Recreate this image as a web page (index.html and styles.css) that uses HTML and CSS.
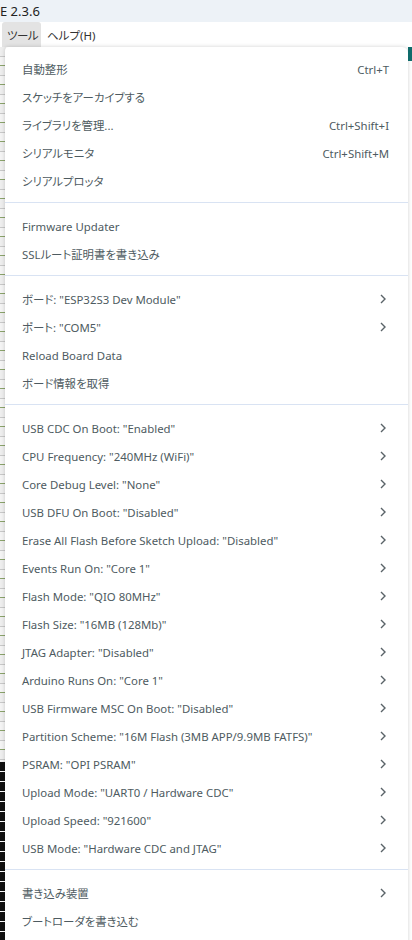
FILE: index.html
```html
<!DOCTYPE html>
<html lang="ja">
<head>
<meta charset="utf-8">
<link rel="stylesheet" href="styles.css">
</head>
<body>
<div class="titlebar">E 2.3.6</div>
<div class="menubar">
  <span class="mb-item active">ツール</span>
  <span class="mb-item">ヘルプ(H)</span>
</div>
<div class="backdrop">
  <div class="strip-left">
    <div class="bits"></div>
    <div class="dark"></div>
  </div>
</div>
<div class="menu">
  <div class="group">
    <div class="item"><span class="label">自動整形</span><span class="key">Ctrl+T</span></div>
    <div class="item"><span class="label">スケッチをアーカイブする</span></div>
    <div class="item"><span class="label">ライブラリを管理...</span><span class="key">Ctrl+Shift+I</span></div>
    <div class="item"><span class="label">シリアルモニタ</span><span class="key">Ctrl+Shift+M</span></div>
    <div class="item"><span class="label">シリアルプロッタ</span></div>
  </div>
  <div class="sep"></div>
  <div class="group">
    <div class="item"><span class="label">Firmware Updater</span></div>
    <div class="item"><span class="label">SSLルート証明書を書き込み</span></div>
  </div>
  <div class="sep"></div>
  <div class="group">
    <div class="item sub"><span class="label">ボード: "ESP32S3 Dev Module"</span><svg class="chev" viewBox="0 0 6 10"><path d="M1 1l4 4-4 4"/></svg></div>
    <div class="item sub"><span class="label">ポート: "COM5"</span><svg class="chev" viewBox="0 0 6 10"><path d="M1 1l4 4-4 4"/></svg></div>
    <div class="item"><span class="label">Reload Board Data</span></div>
    <div class="item"><span class="label">ボード情報を取得</span></div>
  </div>
  <div class="sep"></div>
  <div class="group">
    <div class="item sub"><span class="label">USB CDC On Boot: "Enabled"</span><svg class="chev" viewBox="0 0 6 10"><path d="M1 1l4 4-4 4"/></svg></div>
    <div class="item sub"><span class="label">CPU Frequency: "240MHz (WiFi)"</span><svg class="chev" viewBox="0 0 6 10"><path d="M1 1l4 4-4 4"/></svg></div>
    <div class="item sub"><span class="label">Core Debug Level: "None"</span><svg class="chev" viewBox="0 0 6 10"><path d="M1 1l4 4-4 4"/></svg></div>
    <div class="item sub"><span class="label">USB DFU On Boot: "Disabled"</span><svg class="chev" viewBox="0 0 6 10"><path d="M1 1l4 4-4 4"/></svg></div>
    <div class="item sub"><span class="label">Erase All Flash Before Sketch Upload: "Disabled"</span><svg class="chev" viewBox="0 0 6 10"><path d="M1 1l4 4-4 4"/></svg></div>
    <div class="item sub"><span class="label">Events Run On: "Core 1"</span><svg class="chev" viewBox="0 0 6 10"><path d="M1 1l4 4-4 4"/></svg></div>
    <div class="item sub"><span class="label">Flash Mode: "QIO 80MHz"</span><svg class="chev" viewBox="0 0 6 10"><path d="M1 1l4 4-4 4"/></svg></div>
    <div class="item sub"><span class="label">Flash Size: "16MB (128Mb)"</span><svg class="chev" viewBox="0 0 6 10"><path d="M1 1l4 4-4 4"/></svg></div>
    <div class="item sub"><span class="label">JTAG Adapter: "Disabled"</span><svg class="chev" viewBox="0 0 6 10"><path d="M1 1l4 4-4 4"/></svg></div>
    <div class="item sub"><span class="label">Arduino Runs On: "Core 1"</span><svg class="chev" viewBox="0 0 6 10"><path d="M1 1l4 4-4 4"/></svg></div>
    <div class="item sub"><span class="label">USB Firmware MSC On Boot: "Disabled"</span><svg class="chev" viewBox="0 0 6 10"><path d="M1 1l4 4-4 4"/></svg></div>
    <div class="item sub"><span class="label">Partition Scheme: "16M Flash (3MB APP/9.9MB FATFS)"</span><svg class="chev" viewBox="0 0 6 10"><path d="M1 1l4 4-4 4"/></svg></div>
    <div class="item sub"><span class="label">PSRAM: "OPI PSRAM"</span><svg class="chev" viewBox="0 0 6 10"><path d="M1 1l4 4-4 4"/></svg></div>
    <div class="item sub"><span class="label">Upload Mode: "UART0 / Hardware CDC"</span><svg class="chev" viewBox="0 0 6 10"><path d="M1 1l4 4-4 4"/></svg></div>
    <div class="item sub"><span class="label">Upload Speed: "921600"</span><svg class="chev" viewBox="0 0 6 10"><path d="M1 1l4 4-4 4"/></svg></div>
    <div class="item sub"><span class="label">USB Mode: "Hardware CDC and JTAG"</span><svg class="chev" viewBox="0 0 6 10"><path d="M1 1l4 4-4 4"/></svg></div>
  </div>
  <div class="sep"></div>
  <div class="group">
    <div class="item sub"><span class="label">書き込み装置</span><svg class="chev" viewBox="0 0 6 10"><path d="M1 1l4 4-4 4"/></svg></div>
    <div class="item"><span class="label">ブートローダを書き込む</span></div>
  </div>
</div>
</body>
</html>
```
FILE: styles.css
```css
* { box-sizing: border-box; }
html, body {
  margin: 0;
  padding: 0;
  width: 412px;
  height: 940px;
  overflow: hidden;
  background: #ffffff;
  font-family: "Noto Sans", "Noto Sans CJK JP", sans-serif;
  font-feature-settings: "palt";
}
.titlebar {
  height: 22px;
  background: #edf2f7;
  color: #222;
  font-size: 13px;
  line-height: 22px;
  padding-left: 0;
}
.menubar {
  height: 25px;
  background: #ffffff;
  display: flex;
  align-items: stretch;
  padding-left: 2px;
  font-size: 11.5px;
  color: #333;
}
.mb-item {
  display: flex;
  align-items: center;
  white-space: nowrap;
  padding: 0 0 0 6px;
}
.mb-item.active {
  width: 39px;
  padding-left: 5px;
  letter-spacing: -0.6px;
  background: #e3e3e3;
  border-radius: 3px 3px 0 0;
}
.backdrop {
  height: 893px;
  display: flex;
  justify-content: space-between;
  background: #ffffff;
}
.strip-left {
  width: 6px;
  display: flex;
  flex-direction: column;
}
.bits {
  height: 715px;
  background: repeating-linear-gradient(#eeeeee 0 9px, #c8c8c8 9px 10px, #f4f4f4 10px 18px, #8aa36a 18px 19px);
}
.dark {
  flex: 1;
  background: repeating-linear-gradient(#111 0 9px, #ffffff 9px 10px);
}
.menu {
  position: absolute;
  left: 5px;
  top: 47px;
  width: 403px;
  height: 900px;
  background: #ffffff;
  border-radius: 4px 6px 0 0;
  box-shadow: 0 0 4px rgba(0,0,0,0.18);
  padding-top: 8px;
  color: #4e5b61;
  font-size: 11.4px;
}
.menu::before {
  content: "";
  position: absolute;
  right: -4px;
  top: 0;
  width: 4px;
  height: 14px;
  background: #0f6b6b;
}
.item {
  height: 28px;
  display: flex;
  align-items: center;
  padding: 0 19px 0 17px;
}
.label {
  flex: 1;
  white-space: nowrap;
}
.key {
  color: #4e5b61;
}
.chev {
  width: 6px;
  height: 10px;
  margin-right: 3px;
  fill: none;
  stroke: #5a6368;
  stroke-width: 1.4;
}
.sep {
  height: 1px;
  background: #d9e3f3;
  margin: 7px 0 9px;
}
```
